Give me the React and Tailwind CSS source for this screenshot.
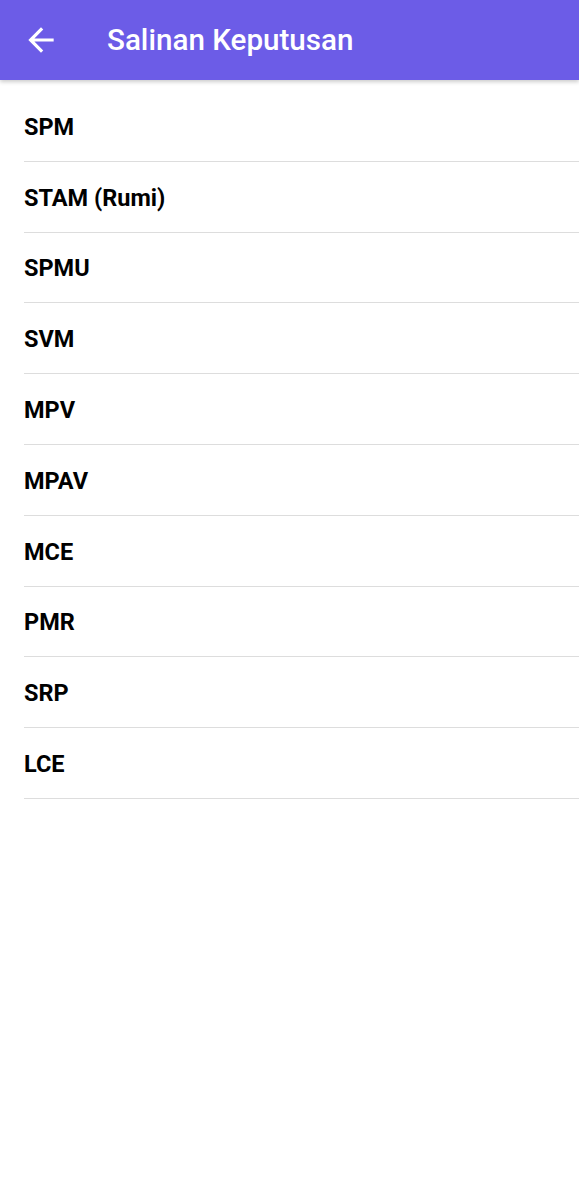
import React from 'react';

const items = ['SPM', 'STAM (Rumi)', 'SPMU', 'SVM', 'MPV', 'MPAV', 'MCE', 'PMR', 'SRP', 'LCE'];

export default function App() {
  return (
    <div className="min-h-screen bg-white font-['Roboto',sans-serif]">
      {/* Toolbar */}
      <header className="h-[80px] bg-[#6c5ce7] flex items-center shadow-[0_2px_4px_rgba(0,0,0,0.2)] relative z-10">
        <button className="w-[38px] h-[38px] ml-[22px] flex items-center justify-center text-white">
          <svg viewBox="0 0 24 24" className="w-[38px] h-[38px]" fill="currentColor">
            <path d="M20 11H7.83l5.59-5.59L12 4l-8 8 8 8 1.41-1.41L7.83 13H20v-2z" />
          </svg>
        </button>
        <h1 className="ml-[47px] text-white text-[29.6px] font-medium">Salinan Keputusan</h1>
      </header>

      {/* List */}
      <ul className="pt-[11px] pl-[24px]">
        {items.map((item) => (
          <li key={item} className="h-[70.8px] pt-[3px] flex items-center border-b border-[#dddddd] box-border">
            <span className="text-[23.5px] font-bold text-black">{item}</span>
          </li>
        ))}
      </ul>
    </div>
  );
}
